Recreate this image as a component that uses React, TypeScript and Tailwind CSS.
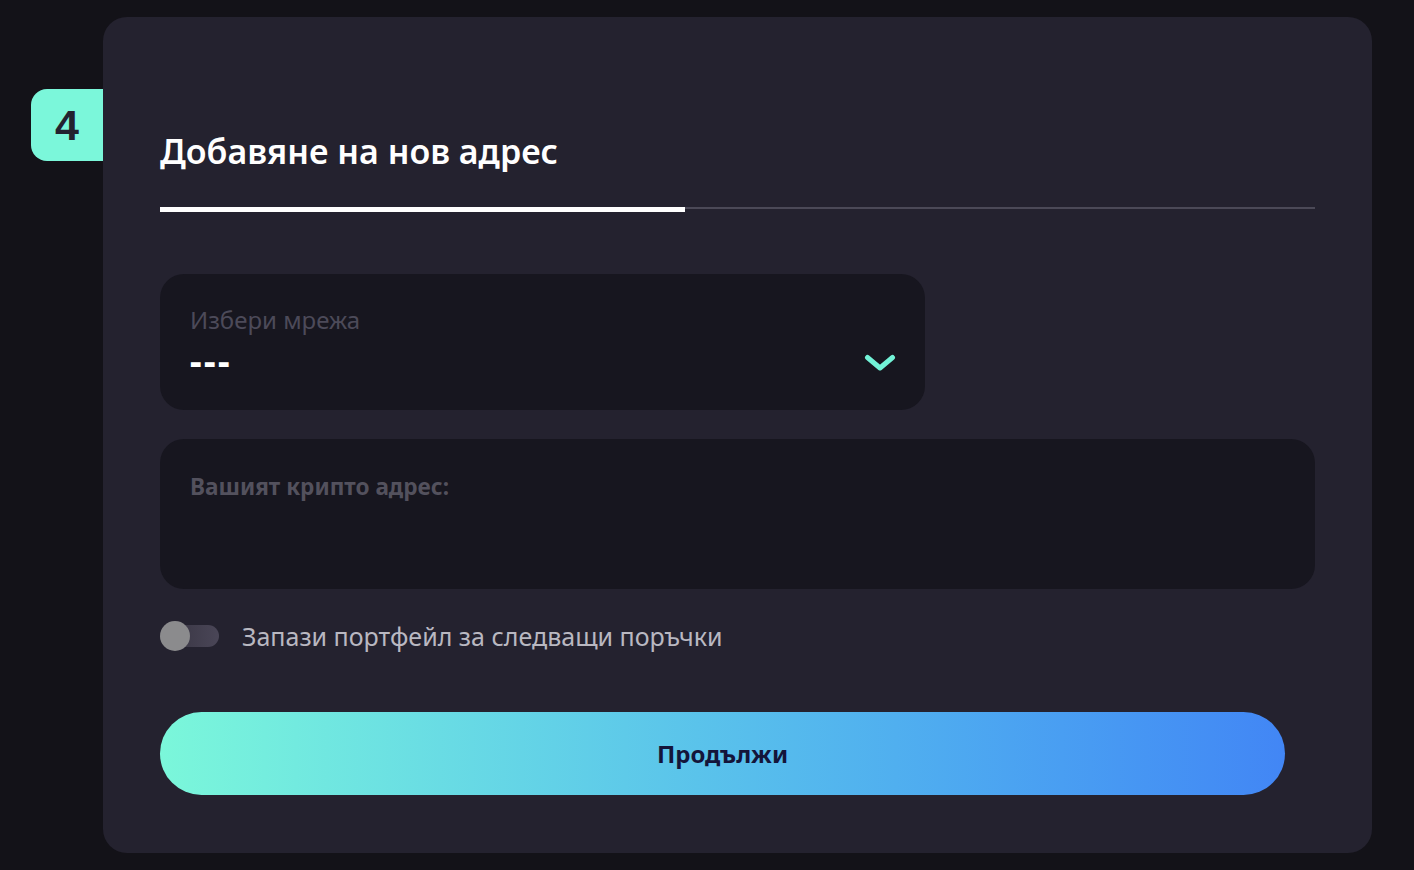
import { useState } from "react";

export default function App() {
  const [save, setSave] = useState(false);

  return (
    <div className="min-h-[870px] w-full bg-[#131218] pl-[103px] pt-[17px] font-['Noto_Sans',sans-serif]">
      <div className="relative w-[1269px] rounded-[24px] bg-[#24222f] px-[57px] pb-[58px] pt-[113px]">
        {/* step badge */}
        <div className="absolute left-[-72px] top-[72px] flex h-[72px] w-[72px] items-center justify-center rounded-l-[16px] bg-[#7bf7da] font-['Liberation_Sans',sans-serif] text-[43px] font-bold text-[#23222f]">
          4
        </div>

        <h1 className="text-[34px] font-semibold leading-[43px] text-white">
          Добавяне на нов адрес
        </h1>

        {/* tabs underline */}
        <div className="mt-[34px] flex items-start">
          <div className="h-[5px] w-[525px] bg-white"></div>
          <div className="h-[2px] flex-1 bg-[#4b4957]"></div>
        </div>

        {/* network select */}
        <div className="mt-[62px] flex h-[136px] w-[765px] justify-between rounded-[24px] bg-[#17161f] pl-[30px] pr-[29px] pt-[32px]">
          <div className="flex flex-col">
            <span className="text-[24px] leading-[28px] text-[#4c4a59]">Избери мрежа</span>
            <span className="mt-[9px] text-[36px] font-extrabold leading-[36px] tracking-[2.5px] text-white">---</span>
          </div>
          <svg width="32" height="20" viewBox="0 0 32 20" className="mt-[47px]">
            <path d="M3.5 4.5 L16 15 L28.5 4.5" fill="none" stroke="#72f3d7" strokeWidth="5" strokeLinecap="round" strokeLinejoin="round" />
          </svg>
        </div>

        {/* address input */}
        <div className="mt-[29px] h-[150px] w-full rounded-[24px] bg-[#17161f] px-[30px] pt-[33px]">
          <span className="text-[22.6px] font-bold leading-[30px] text-[#53515d]">Вашият крипто адрес:</span>
        </div>

        {/* save toggle */}
        <div className="mt-[32px] flex items-center gap-[23px]">
          <button
            onClick={() => setSave(!save)}
            className="relative flex h-[30px] w-[59px] items-center"
          >
            <span className="h-[22px] w-full rounded-full bg-linear-to-r from-[#35323f] to-[#4a4657]"></span>
            <span className="absolute left-0 top-0 h-[30px] w-[30px] rounded-full bg-[#8b8b8d]"></span>
          </button>
          <span className="text-[25px] leading-[30px] text-[#b9b8c1]">Запази портфейл за следващи поръчки</span>
        </div>

        {/* continue */}
        <button className="mt-[61px] flex h-[83px] w-[1125px] items-center justify-center rounded-full bg-linear-to-r from-[#7bf7da] to-[#4286f5] text-[24px] font-bold text-[#14153a]">
          Продължи
        </button>
      </div>
    </div>
  );
}
